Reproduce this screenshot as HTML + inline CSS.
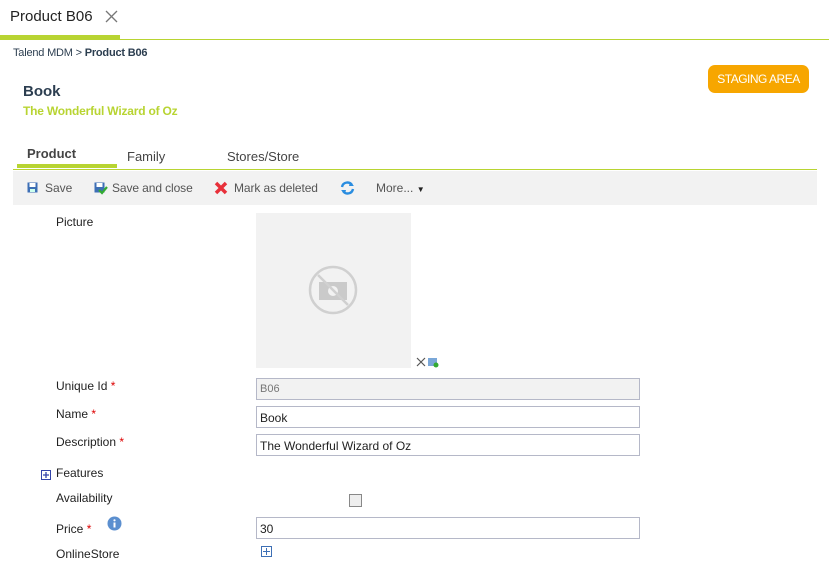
<!DOCTYPE html>
<html><head><meta charset="utf-8"><style>
*{margin:0;padding:0;box-sizing:border-box}
body{width:829px;height:588px;background:#fff;font-family:"Liberation Sans",sans-serif;position:relative;overflow:hidden;color:#333}
.a{position:absolute;white-space:nowrap}
.lbl{font-size:12px;color:#222}
.req{color:#d00}
.inp{position:absolute;left:256px;width:384px;height:22px;border:1px solid #b5b8c8;font-size:12px;padding:4px 3px;color:#222}
</style></head><body>
<div class="a" style="left:10px;top:8px;font-size:15px;color:#222">Product B06</div>
<svg class="a" style="left:105px;top:10px" width="13" height="13"><path d="M1 1L12 12M12 1L1 12" stroke="#777" stroke-width="1.3"/></svg>
<div class="a" style="left:0;top:35px;width:120px;height:4px;background:#b8d432"></div>
<div class="a" style="left:0;top:39px;width:829px;height:1px;background:#b8d432"></div>
<div class="a" style="left:13px;top:47px;font-size:11px;color:#2c3e50;letter-spacing:-0.2px">Talend MDM &gt; <b>Product B06</b></div>
<div class="a" style="left:23px;top:83px;font-size:15px;font-weight:bold;color:#2c3e50">Book</div>
<div class="a" style="left:23px;top:104px;font-size:12px;font-weight:bold;color:#b8d432;letter-spacing:-0.2px">The Wonderful Wizard of Oz</div>
<div class="a" style="left:708px;top:65px;width:101px;height:28px;background:#f7a600;border-radius:7px;color:#fff;font-size:12px;line-height:28px;text-align:center;letter-spacing:-0.5px">STAGING AREA</div>
<div class="a" style="left:27px;top:146px;font-size:13px;font-weight:bold;color:#444">Product</div>
<div class="a" style="left:17px;top:164px;width:100px;height:4px;background:#b8d432"></div>
<div class="a" style="left:127px;top:149px;font-size:13px;color:#444">Family</div>
<div class="a" style="left:227px;top:149px;font-size:13px;color:#444">Stores/Store</div>
<div class="a" style="left:13px;top:169px;width:804px;height:1px;background:#b8d432"></div>
<div class="a" style="left:13px;top:171px;width:804px;height:34px;background:#f2f2f2"></div>
<svg class="a" style="left:27px;top:182px" width="11" height="11"><rect x="0.5" y="0.5" width="10" height="10" fill="#3d6fb5"/><rect x="2.5" y="1" width="6" height="4" fill="#fff"/><rect x="3" y="7" width="5" height="3" fill="#cfe"/></svg>
<div class="a" style="left:45px;top:181px;font-size:12px;color:#555">Save</div>
<svg class="a" style="left:94px;top:182px" width="14" height="13"><rect x="0.5" y="0.5" width="10" height="10" fill="#3d6fb5"/><rect x="2.5" y="1" width="6" height="4" fill="#fff"/><path d="M5 8L8 11L13 5" stroke="#3a3" stroke-width="2.2" fill="none"/></svg>
<div class="a" style="left:112px;top:181px;font-size:12px;color:#555;letter-spacing:-0.1px">Save and close</div>
<svg class="a" style="left:214px;top:181px" width="14" height="14"><path d="M2 2L12 12M12 2L2 12" stroke="#e8303a" stroke-width="3.5"/></svg>
<div class="a" style="left:234px;top:181px;font-size:12px;color:#555;letter-spacing:-0.1px">Mark as deleted</div>
<svg class="a" style="left:340px;top:180px" width="15" height="16"><path d="M2 7A5.5 5.5 0 0 1 12 5" stroke="#2a8de0" stroke-width="2.4" fill="none"/><path d="M13 9A5.5 5.5 0 0 1 3 11" stroke="#2a8de0" stroke-width="2.4" fill="none"/><path d="M10 2L14 6L9 6Z M5 14L1 10L6 10Z" fill="#2a8de0"/></svg>
<div class="a" style="left:376px;top:181px;font-size:12px;color:#555">More... <span style="font-size:8px;color:#222">▼</span></div>
<div class="a lbl" style="left:56px;top:215px">Picture</div>
<div class="a" style="left:256px;top:213px;width:155px;height:155px;background:#f2f2f2"></div>
<svg class="a" style="left:308px;top:265px" width="50" height="50"><circle cx="25" cy="25" r="23" stroke="#d0d0d0" stroke-width="2.5" fill="none"/><rect x="11" y="17" width="28" height="18" fill="#cacaca"/><circle cx="25" cy="26" r="5" fill="#f2f2f2"/><path d="M10 10L40 40" stroke="#d0d0d0" stroke-width="2.5"/></svg>
<svg class="a" style="left:416px;top:357px" width="24" height="11"><path d="M1 1L9 9M9 1L1 9" stroke="#555" stroke-width="1.2"/><rect x="12" y="1" width="9" height="8" fill="#7aa7d8"/><circle cx="20" cy="8" r="2.5" fill="#3a3"/></svg>
<div class="a lbl" style="left:56px;top:379px">Unique Id <span class="req">*</span></div>
<div class="inp" style="top:378px;background:#f2f2f2;color:#777;font-size:11px">B06</div>
<div class="a lbl" style="left:56px;top:407px">Name <span class="req">*</span></div>
<div class="inp" style="top:406px">Book</div>
<div class="a lbl" style="left:56px;top:435px">Description <span class="req">*</span></div>
<div class="inp" style="top:434px">The Wonderful Wizard of Oz</div>
<svg class="a" style="left:41px;top:470px" width="10" height="10"><rect x="0.5" y="0.5" width="9" height="9" fill="#fff" stroke="#3344aa"/><path d="M2 5H8M5 2V8" stroke="#3344aa" stroke-width="1.3"/></svg>
<div class="a lbl" style="left:56px;top:466px">Features</div>
<div class="a lbl" style="left:56px;top:491px">Availability</div>
<div class="a" style="left:349px;top:494px;width:13px;height:13px;border:1px solid #888;background:#eee"></div>
<div class="a lbl" style="left:56px;top:522px">Price <span class="req">*</span></div>
<svg class="a" style="left:107px;top:516px" width="15" height="15"><circle cx="7.5" cy="7.5" r="7" fill="#5b8fcf"/><rect x="6.5" y="6.5" width="2" height="5" fill="#fff"/><circle cx="7.5" cy="4.3" r="1.1" fill="#fff"/></svg>
<div class="inp" style="top:517px">30</div>
<div class="a lbl" style="left:56px;top:547px">OnlineStore</div>
<svg class="a" style="left:261px;top:546px" width="11" height="11"><rect x="0.5" y="0.5" width="10" height="10" fill="#fff" stroke="#3d6fb5"/><path d="M2 5.5H9M5.5 2V9" stroke="#3d6fb5" stroke-width="1"/></svg>
</body></html>
